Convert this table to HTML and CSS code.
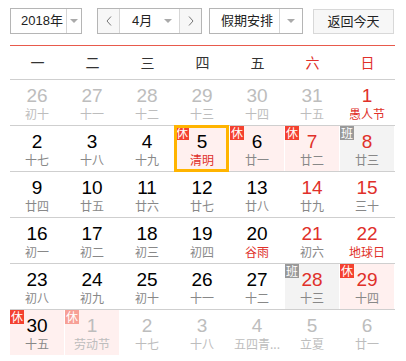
FILE: index.html
```html
<!DOCTYPE html>
<html lang="zh-CN">
<head>
<meta charset="utf-8">
<title>日历</title>
<link rel="stylesheet" href="styles.css">
</head>
<body>
<div class="toolbar">
  <div class="select year">
    <span class="label">2018年</span>
    <span class="drop"><i class="caret"></i></span>
  </div>
  <div class="month-group">
    <span class="arrow"><svg width="6" height="10" viewBox="0 0 6 10"><polyline points="5,0.5 1,5 5,9.5" fill="none" stroke="#777" stroke-width="1"/></svg></span>
    <span class="month"><span class="label">4月</span><i class="caret"></i></span>
    <span class="arrow"><svg width="6" height="10" viewBox="0 0 6 10"><polyline points="1,0.5 5,5 1,9.5" fill="none" stroke="#777" stroke-width="1"/></svg></span>
  </div>
  <div class="select holiday">
    <span class="label">假期安排</span>
    <span class="drop"><i class="caret"></i></span>
  </div>
  <div class="btn-today">返回今天</div>
</div>

<div class="calendar">
  <div class="weekdays">
    <span>一</span><span>二</span><span>三</span><span>四</span><span>五</span><span class="red">六</span><span class="red">日</span>
  </div>
  <div class="week">
    <div class="day other"><span class="num">26</span><span class="lunar">初十</span></div>
    <div class="day other"><span class="num">27</span><span class="lunar">十一</span></div>
    <div class="day other"><span class="num">28</span><span class="lunar">十二</span></div>
    <div class="day other"><span class="num">29</span><span class="lunar">十三</span></div>
    <div class="day other"><span class="num">30</span><span class="lunar">十四</span></div>
    <div class="day other"><span class="num">31</span><span class="lunar">十五</span></div>
    <div class="day weekend fest"><span class="num">1</span><span class="lunar">愚人节</span></div>
  </div>
  <div class="week">
    <div class="day"><span class="num">2</span><span class="lunar">十七</span></div>
    <div class="day"><span class="num">3</span><span class="lunar">十八</span></div>
    <div class="day"><span class="num">4</span><span class="lunar">十九</span></div>
    <div class="day rest fest today"><span class="badge">休</span><span class="num">5</span><span class="lunar">清明</span></div>
    <div class="day rest"><span class="badge">休</span><span class="num">6</span><span class="lunar">廿一</span></div>
    <div class="day rest weekend"><span class="badge">休</span><span class="num">7</span><span class="lunar">廿二</span></div>
    <div class="day work weekend"><span class="badge">班</span><span class="num">8</span><span class="lunar">廿三</span></div>
  </div>
  <div class="week">
    <div class="day"><span class="num">9</span><span class="lunar">廿四</span></div>
    <div class="day"><span class="num">10</span><span class="lunar">廿五</span></div>
    <div class="day"><span class="num">11</span><span class="lunar">廿六</span></div>
    <div class="day"><span class="num">12</span><span class="lunar">廿七</span></div>
    <div class="day"><span class="num">13</span><span class="lunar">廿八</span></div>
    <div class="day weekend"><span class="num">14</span><span class="lunar">廿九</span></div>
    <div class="day weekend"><span class="num">15</span><span class="lunar">三十</span></div>
  </div>
  <div class="week">
    <div class="day"><span class="num">16</span><span class="lunar">初一</span></div>
    <div class="day"><span class="num">17</span><span class="lunar">初二</span></div>
    <div class="day"><span class="num">18</span><span class="lunar">初三</span></div>
    <div class="day"><span class="num">19</span><span class="lunar">初四</span></div>
    <div class="day fest"><span class="num">20</span><span class="lunar">谷雨</span></div>
    <div class="day weekend"><span class="num">21</span><span class="lunar">初六</span></div>
    <div class="day weekend fest"><span class="num">22</span><span class="lunar">地球日</span></div>
  </div>
  <div class="week">
    <div class="day"><span class="num">23</span><span class="lunar">初八</span></div>
    <div class="day"><span class="num">24</span><span class="lunar">初九</span></div>
    <div class="day"><span class="num">25</span><span class="lunar">初十</span></div>
    <div class="day"><span class="num">26</span><span class="lunar">十一</span></div>
    <div class="day"><span class="num">27</span><span class="lunar">十二</span></div>
    <div class="day work weekend"><span class="badge">班</span><span class="num">28</span><span class="lunar">十三</span></div>
    <div class="day rest weekend"><span class="badge">休</span><span class="num">29</span><span class="lunar">十四</span></div>
  </div>
  <div class="week last">
    <div class="day rest"><span class="badge">休</span><span class="num">30</span><span class="lunar">十五</span></div>
    <div class="day rest other"><span class="badge">休</span><span class="num">1</span><span class="lunar">劳动节</span></div>
    <div class="day other"><span class="num">2</span><span class="lunar">十七</span></div>
    <div class="day other"><span class="num">3</span><span class="lunar">十八</span></div>
    <div class="day other"><span class="num">4</span><span class="lunar">五四青...</span></div>
    <div class="day other"><span class="num">5</span><span class="lunar">立夏</span></div>
    <div class="day other"><span class="num">6</span><span class="lunar">廿一</span></div>
  </div>
</div>
</body>
</html>
```
FILE: styles.css
```css
* { box-sizing: border-box; }

html, body {
  margin: 0;
  padding: 0;
  background: #fff;
}

body {
  width: 406px;
  height: 361px;
  overflow: hidden;
  font-family: "Liberation Sans", "Noto Sans CJK SC", sans-serif;
  color: #000;
}

/* toolbar */
.toolbar {
  display: flex;
  align-items: flex-start;
  padding: 8px 0 0 10px;
  height: 34px;
}

.select {
  display: flex;
  height: 26px;
  border: 1px solid #b5b5b5;
  background: #fff;
  font-size: 13px;
  line-height: 24px;
  color: #222;
}

.select .label {
  padding-left: 10px;
}

.year {
  width: 72px;
}

.year .label {
  width: 55px;
}

.drop {
  flex: 1;
  display: flex;
  align-items: center;
  justify-content: center;
  border-left: 1px solid #d6d6d6;
}

.caret {
  display: inline-block;
  width: 0;
  height: 0;
  border-left: 4px solid transparent;
  border-right: 4px solid transparent;
  border-top: 4px solid #aaa;
}

.month-group {
  display: flex;
  margin-left: 15px;
  height: 26px;
  border: 1px solid #b5b5b5;
  font-size: 13px;
  line-height: 24px;
  color: #222;
}

.arrow {
  width: 21px;
  display: flex;
  align-items: center;
  justify-content: center;
  background: #f7f7f7;
}

.month {
  width: 61px;
  display: flex;
  align-items: center;
  border-left: 1px solid #d6d6d6;
  border-right: 1px solid #d6d6d6;
  background: #fff;
  padding-left: 12px;
}

.month .label {
  width: 32px;
}

.holiday {
  margin-left: 7px;
  width: 94px;
}

.holiday .label {
  width: 69px;
  padding-left: 11px;
}

.btn-today {
  margin-left: 10px;
  margin-top: 1px;
  width: 81px;
  height: 25px;
  border: 1px solid #d8d8d8;
  background: #f7f7f7;
  font-size: 13px;
  line-height: 23px;
  text-align: center;
  color: #222;
}

/* calendar */
.calendar {
  margin: 11px 0 0 10px;
  width: 385px;
}

.weekdays {
  display: grid;
  grid-template-columns: repeat(7, 55px);
  height: 35px;
  border-top: 1px solid #e85a4c;
  border-bottom: 1px solid #cfcfcf;
  font-family: "Noto Sans CJK SC", sans-serif;
  font-size: 14px;
  line-height: 33px;
  text-align: center;
  color: #333;
}

.weekdays .red {
  color: #e0302a;
}

.week {
  display: grid;
  grid-template-columns: repeat(7, 55px);
  height: 46px;
  border-bottom: 1px solid #cfcfcf;
}

.week.last {
  border-bottom: none;
}

.day {
  position: relative;
  height: 45px;
  border-right: 1px solid #fff;
  display: flex;
  flex-direction: column;
  align-items: center;
  padding-top: 6px;
}

.num {
  font-size: 19px;
  line-height: 20px;
  height: 20px;
  color: #000;
}

.lunar {
  font-family: "Noto Sans CJK SC", sans-serif;
  font-size: 12px;
  line-height: 16px;
  height: 16px;
  margin-top: 0;
  color: #888;
  white-space: nowrap;
}

.weekend .num { color: #e0302a; }
.fest .lunar { color: #e0302a; }

.other .num,
.other .lunar { color: #bdbdbd; }

.rest { background: #fff0ef; }
.work { background: #f3f3f3; }

.badge {
  position: absolute;
  top: 0;
  left: 0;
  width: 14px;
  height: 14px;
  font-family: "Noto Sans CJK SC", sans-serif;
  font-size: 12px;
  line-height: 14px;
  text-align: center;
  color: #fff;
  background: #f4412f;
}

.work .badge { background: #999; }
.other .badge { background: #f7a096; }

.today::after {
  content: "";
  position: absolute;
  top: -1px;
  left: -1px;
  right: 0;
  bottom: -1px;
  border: 3px solid #ffb400;
}
```
